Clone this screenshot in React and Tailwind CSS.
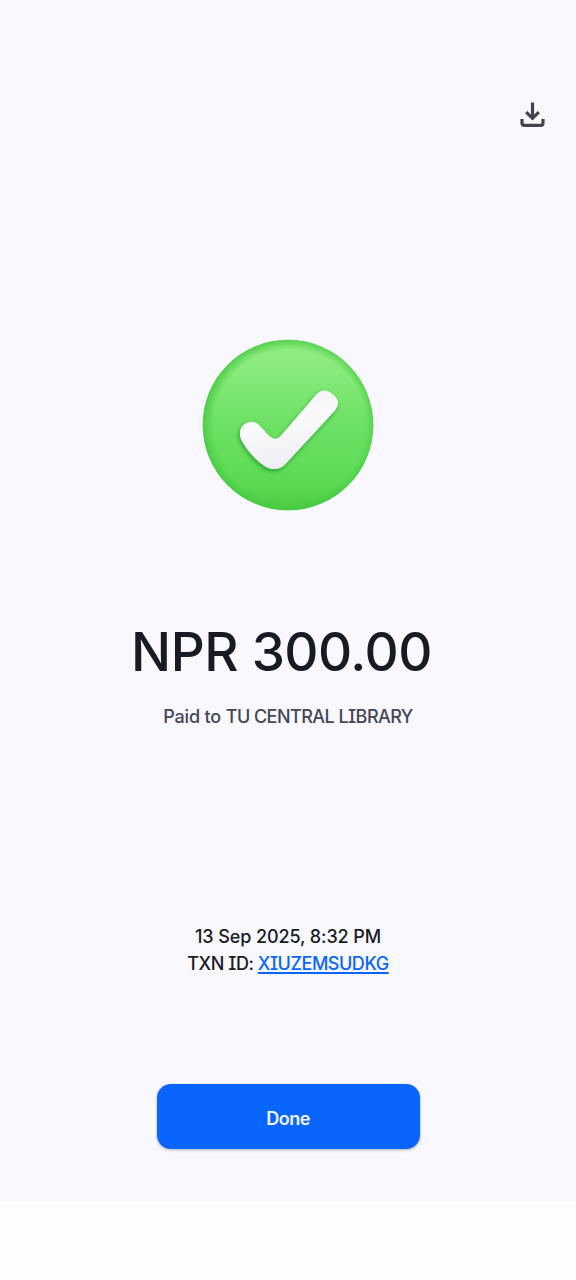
import React from "react";

const payment = {
  amount: "NPR 300.00",
  recipient: "TU CENTRAL LIBRARY",
  date: "13 Sep 2025, 8:32 PM",
  txnId: "XIUZEMSUDKG",
};

const checkPath =
  "M56.5 85.5L67 96.7C71.5 100.6 75 100.8 79 96.5L113 57C117.5 51.5 122.5 50 128 53.2C131.5 55.4 134 57.5 135.5 61C136.8 64.5 135.5 68.2 132.5 72L84 124.5C78 131.5 69 131.5 62.5 127C53.5 121 45.5 112 40 102C36.5 95.5 37.5 89 42.5 85.3C47 82 52.5 81.8 56.5 85.5Z";

function DownloadIcon() {
  return (
    <svg width="40" height="40" viewBox="0 0 40 40" fill="none" stroke="#41434f" strokeWidth="3.2" aria-hidden="true">
      <path d="M20.5 8.6V24M14.2 18.2L20.5 24.3L26.8 18.2" />
      <path d="M10 25V29Q10 31.4 12.4 31.4H28.6Q31 31.4 31 29V25" />
    </svg>
  );
}

function SuccessBadge() {
  return (
    <svg width="172" height="172" viewBox="0 0 172 172" aria-hidden="true">
      <defs>
        <linearGradient id="face" x1="0" y1="0" x2="0" y2="1">
          <stop offset="0" stopColor="#8fed80" />
          <stop offset="0.12" stopColor="#8dec7f" />
          <stop offset="0.5" stopColor="#6de165" />
          <stop offset="0.85" stopColor="#5bd953" />
          <stop offset="1" stopColor="#4dcb43" />
        </linearGradient>
        <radialGradient id="rim" cx="0.51" cy="0.505" r="0.52">
          <stop offset="0.86" stopColor="#43c93f" stopOpacity="0" />
          <stop offset="0.94" stopColor="#43c93f" stopOpacity="0.55" />
          <stop offset="1" stopColor="#48c043" stopOpacity="0.85" />
        </radialGradient>
        <linearGradient id="tick" x1="0" y1="0" x2="0.3" y2="1">
          <stop offset="0" stopColor="#f0f1f3" />
          <stop offset="0.5" stopColor="#fafafb" />
          <stop offset="1" stopColor="#eeeff4" />
        </linearGradient>
        <filter id="tickShadow" x="-20%" y="-20%" width="140%" height="150%">
          <feDropShadow dx="-1" dy="2" stdDeviation="2" floodColor="#168a1d" floodOpacity="0.7" />
        </filter>
      </defs>
      <circle cx="86" cy="86" r="85.3" fill="url(#face)" />
      <circle cx="86" cy="86" r="85.3" fill="url(#rim)" />
      <path d={checkPath} fill="url(#tick)" filter="url(#tickShadow)" />
    </svg>
  );
}

function App() {
  return (
    <div className="min-h-screen bg-[#fefefe] font-['Inter',sans-serif] font-medium text-[#191b24] [font-feature-settings:'cv08']">
      <main className="flex h-[1201px] flex-col items-center bg-[#f9f8ff] pt-[94px]">
        <button className="mr-6 self-end" aria-label="Download receipt">
          <DownloadIcon />
        </button>
        <div className="mt-[205px]">
          <SuccessBadge />
        </div>
        <h1 className="mt-[105px] mr-[13px] h-[72px] whitespace-nowrap text-[53px] leading-[72px] font-medium tracking-[-0.5px]">
          {payment.amount}
        </h1>
        <p className="mt-4 whitespace-nowrap text-[18px] leading-[26px] tracking-[-0.55px] text-[#444656]">
          <span className="tracking-[-0.15px]">Paid to </span>
          {payment.recipient}
        </p>
        <div className="mt-[194px] text-center text-[18px] leading-[26.5px]">
          <p className="tracking-[-0.1px]">{payment.date}</p>
          <p className="tracking-[-0.47px]">
            TXN ID:{" "}
            <a className="text-[#0866ff] underline decoration-[1.5px] underline-offset-2">{payment.txnId}</a>
          </p>
        </div>
        <button className="mt-[107px] h-[65px] w-[263px] rounded-[14px] bg-[#0866ff] pt-1 text-[18px] font-semibold tracking-[-0.5px] text-[#f3f4ff] shadow-[0_1px_3px_rgba(0,0,0,0.3)]">
          Done
        </button>
      </main>
    </div>
  );
}

export default App;
